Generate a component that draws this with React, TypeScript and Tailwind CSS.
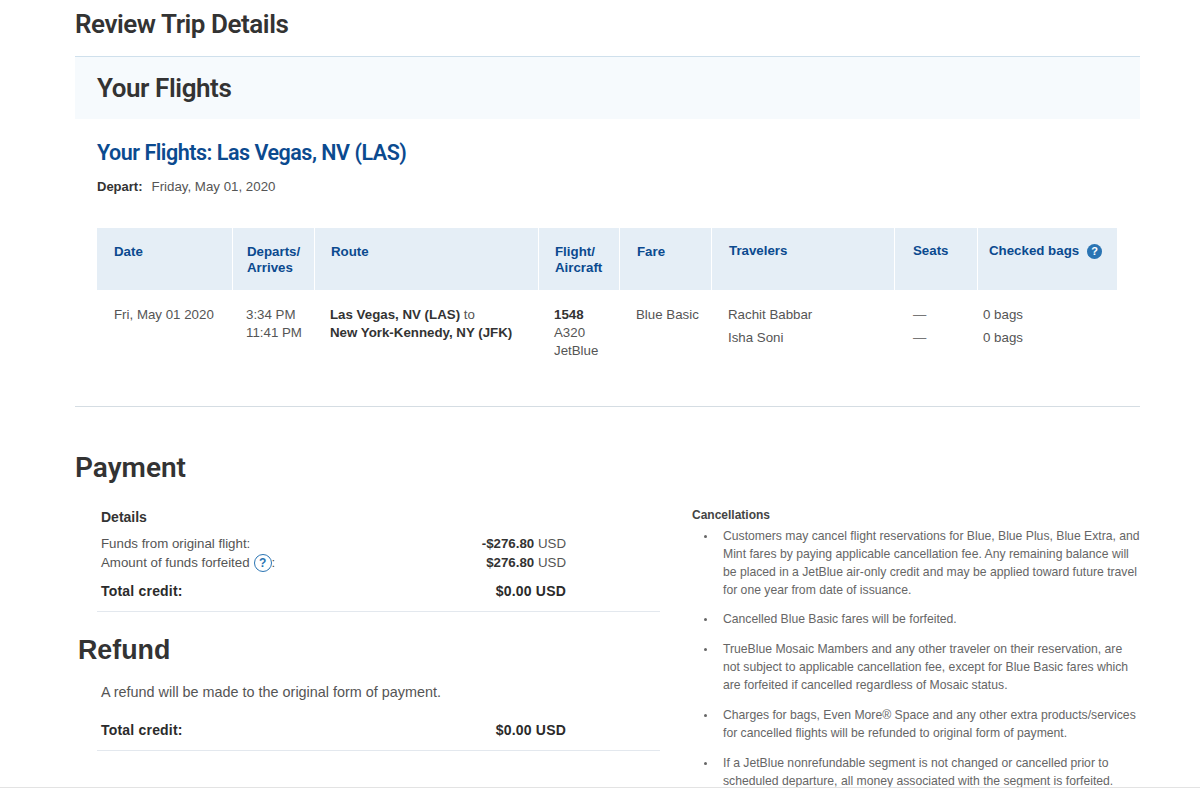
const sans = "font-['Liberation_Sans',Arial,sans-serif]";
const din = "font-['Roboto',sans-serif]";

const HeadCell = ({ children, className = "" }: { children: React.ReactNode; className?: string }) => (
  <div className={`bg-[#e5eef6] text-[13.3px] leading-[16px] font-bold text-[#0b4a8f] ${className}`}>{children}</div>
);

const Cancel = [
  ["Customers may cancel flight reservations for Blue, Blue Plus, Blue Extra, and", "Mint fares by paying applicable cancellation fee. Any remaining balance will", "be placed in a JetBlue air-only credit and may be applied toward future travel", "for one year from date of issuance."],
  ["Cancelled Blue Basic fares will be forfeited."],
  ["TrueBlue Mosaic Mambers and any other traveler on their reservation, are", "not subject to applicable cancellation fee, except for Blue Basic fares which", "are forfeited if cancelled regardless of Mosaic status."],
  ["Charges for bags, Even More® Space and any other extra products/services", "for cancelled flights will be refunded to original form of payment."],
  ["If a JetBlue nonrefundable segment is not changed or cancelled prior to", "scheduled departure, all money associated with the segment is forfeited."],
];

const Total = () => (
  <div className="flex h-[20px] items-center justify-between pl-[4px] pr-[94px] text-[14px] font-bold tracking-[0.2px] text-[#2b2b2b]">
    <span>Total credit:</span>
    <span>$0.00 USD</span>
  </div>
);

export default function App() {
  return (
    <div className={`${sans} relative h-[788px] w-[1200px] overflow-hidden bg-white text-[#555]`}>
      <div className="ml-[75px] w-[1065px]">
        <h1 className={`${din} flex h-[56px] items-center pb-[7px] text-[26px] font-semibold tracking-[-0.45px] text-[#333]`}>Review Trip Details</h1>
        <div className="flex h-[63px] items-center border-t border-[#cfe0ec] bg-[#f6fafd] pl-[22px]">
          <h2 className={`${din} text-[26px] font-semibold tracking-[-0.42px] text-[#333]`}>Your Flights</h2>
        </div>
        <div className="pl-[22px]">
          <h3 className={`${din} mt-[20px] h-[28px] text-[21.5px] leading-[28px] font-semibold tracking-[-0.48px] text-[#0b4a8f]`}>Your Flights: Las Vegas, NV (LAS)</h3>
          <p className="mt-[10px] h-[20px] text-[13.3px] leading-[20px] text-[#555]"><b className="mr-[9px] text-[13px] text-[#333]">Depart:</b>Friday, May 01, 2020</p>

          <div className="mt-[31px] grid h-[62px] w-[1020px] grid-cols-[135px_81px_223px_80px_91px_182px_82px_139px] gap-x-[1px]">
            <HeadCell className="pl-[17px] pt-[16px]">Date</HeadCell>
            <HeadCell className="pl-[14px] pt-[16px]">Departs/<br />Arrives</HeadCell>
            <HeadCell className="pl-[16px] pt-[16px]">Route</HeadCell>
            <HeadCell className="pl-[16px] pt-[16px]">Flight/<br />Aircraft</HeadCell>
            <HeadCell className="pl-[17px] pt-[16px]">Fare</HeadCell>
            <HeadCell className="pl-[17px] pt-[15px]">Travelers</HeadCell>
            <HeadCell className="pl-[18px] pt-[15px]">Seats</HeadCell>
            <HeadCell className="pl-[11px] pt-[15px]">
              <span className="flex items-center gap-[8px]">Checked bags
                <span className="flex h-[15px] w-[15px] items-center justify-center rounded-full bg-[#2a74b3] text-[11px] leading-none text-white">?</span>
              </span>
            </HeadCell>
          </div>

          <div className="grid w-[1021px] grid-cols-[133px_84px_224px_81px_92px_185px_70px_140px] pt-[16px] text-[13.3px] leading-[18px]">
            <div className="pl-[17px]">Fri, May 01 2020</div>
            <div className="pl-[16px]">3:34 PM<br />11:41 PM</div>
            <div className="pl-[16px]"><b className="text-[#333]">Las Vegas, NV (LAS)</b> to<br /><b className="text-[#333]">New York-Kennedy, NY (JFK)</b></div>
            <div className="pl-[16px]"><b className="text-[#333]">1548</b><br />A320<br />JetBlue</div>
            <div className="pl-[17px]">Blue Basic</div>
            <div className="-mt-[3px] pl-[17px] leading-[23px]">Rachit Babbar<br />Isha Soni</div>
            <div className="-mt-[3px] pl-[17px] leading-[23px] text-[#777]">—<br />—</div>
            <div className="-mt-[3px] pl-[17px] leading-[23px]">0 bags<br />0 bags</div>
          </div>
        </div>
        <div className="mt-[46px] border-t border-[#d5dde3]" />
        <h2 className={`${din} mt-[43px] h-[36px] text-[28px] leading-[36px] font-semibold text-[#333]`}>Payment</h2>

        <div className="mt-[21px] flex">
          <div className="ml-[22px] w-[563px]">
            <div className="flex h-[20px] items-center pl-[4px] text-[14px] font-bold text-[#333]">Details</div>
            <div className="mt-[7px] flex justify-between pl-[4px] pr-[94px] text-[13.3px] leading-[19px]">
              <div>
                <div>Funds from original flight:</div>
                <div className="flex items-center">Amount of funds forfeited
                  <span className="ml-[4px] flex h-[18px] w-[18px] items-center justify-center rounded-full border border-[#2a74b3] text-[12px] font-bold leading-none text-[#2a74b3]">?</span>
                  <span>:</span>
                </div>
              </div>
              <div className="text-right">
                <div><b className="text-[#333]">-$276.80</b> USD</div>
                <div><b className="text-[#333]">$276.80</b> USD</div>
              </div>
            </div>
            <div className="mt-[9px]"><Total /></div>
            <div className="mt-[10px] border-t border-[#e3e8ee]" />
            <h2 className="-ml-[19px] mt-[20px] h-[36px] text-[26.8px] leading-[36px] font-bold text-[#333]">Refund</h2>
            <p className="mt-[14px] h-[20px] pl-[4px] text-[14.4px] leading-[20px]">A refund will be made to the original form of payment.</p>
            <div className="mt-[18px]"><Total /></div>
            <div className="mt-[10px] border-t border-[#e3e8ee]" />
          </div>

          <div className="-mt-[1px] ml-[32px] w-[448px] text-[12.2px] leading-[18px] text-[#666]">
            <div className="h-[18px] text-[12px] font-bold text-[#444]">Cancellations</div>
            <ul className="mt-[3px]">
              {Cancel.map((lines, i) => (
                <li key={i} className="relative mb-[12px] pl-[31px] whitespace-nowrap first:mb-[11px]">
                  <span className="absolute left-[12px] top-[8px] h-[3px] w-[3px] rounded-full bg-[#666]" />
                  {lines.map((l, j) => <div key={j}>{l}</div>)}
                </li>
              ))}
            </ul>
          </div>
        </div>
      </div>
      <div className="absolute inset-x-0 bottom-0 h-[1px] bg-[#e3e3e3]" />
    </div>
  );
}
